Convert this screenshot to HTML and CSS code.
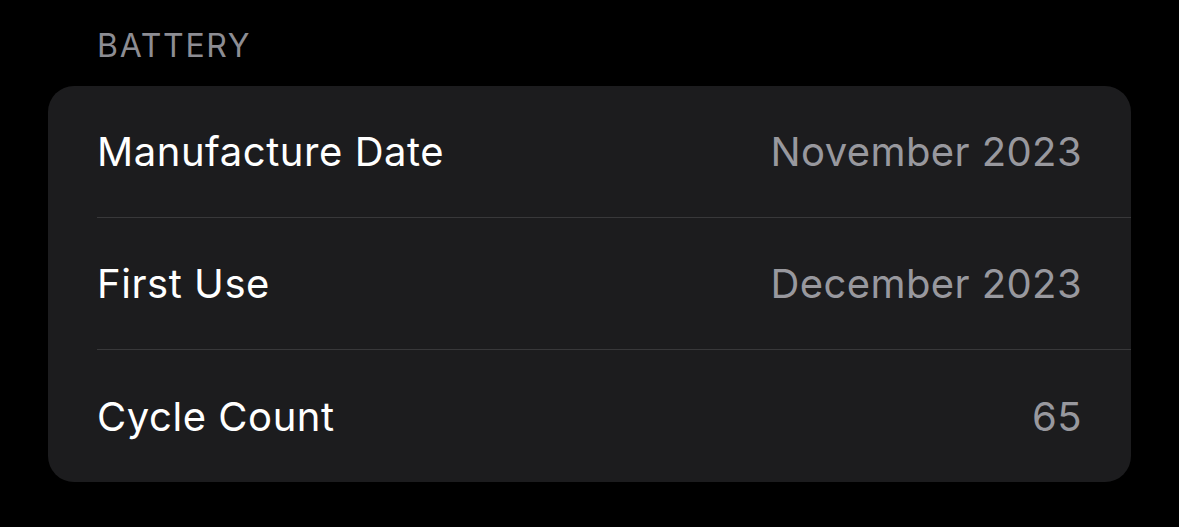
FILE: index.html
```html
<!DOCTYPE html>
<html>
<head>
<meta charset="utf-8">
<link rel="stylesheet" href="styles.css">
</head>
<body>
<div class="section">
  <div class="header">BATTERY</div>
  <div class="card">
    <div class="row">
      <span class="label">Manufacture Date</span>
      <span class="value">November 2023</span>
    </div>
    <div class="row">
      <span class="label">First Use</span>
      <span class="value">December 2023</span>
    </div>
    <div class="row">
      <span class="label">Cycle Count</span>
      <span class="value">65</span>
    </div>
  </div>
</div>
</body>
</html>
```
FILE: styles.css
```css
html, body {
  margin: 0;
  padding: 0;
  background: #000;
  height: 100%;
}
body {
  font-family: Inter, "Noto Sans", sans-serif;
  -webkit-font-smoothing: antialiased;
}
.section {
  padding: 27px 48px 0 48px;
}
.header {
  color: #8d8d93;
  font-size: 32px;
  line-height: 38px;
  padding-left: 49px;
  letter-spacing: 1.7px;
  margin-bottom: 21px;
}
.card {
  background: #1c1c1e;
  border-radius: 26px;
  overflow: hidden;
}
.row {
  display: flex;
  justify-content: space-between;
  align-items: center;
  height: 132px;
  margin-left: 49px;
  padding-right: 49px;
  box-sizing: border-box;
  border-bottom: 1px solid #38383a;
}
.row:last-child {
  border-bottom: none;
}
.label {
  color: #fff;
  font-size: 40px;
  letter-spacing: 0.55px;
}
.value {
  color: #98989e;
  font-size: 40px;
  letter-spacing: 0.4px;
}
```
